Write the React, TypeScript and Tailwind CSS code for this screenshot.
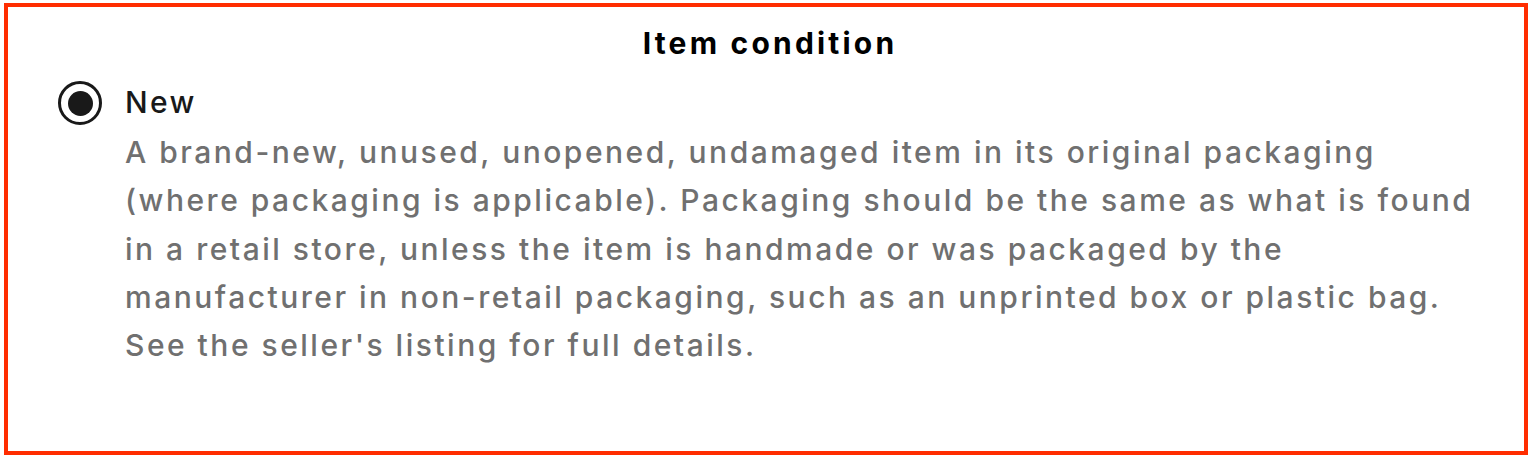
export default function App() {
  return (
    <div className="w-[1532px] h-[458px] bg-white pt-[3px] pl-[4px] font-['Inter',sans-serif]">
      <div className="w-[1524px] h-[452px] border-4 border-[#ff2d00] bg-white">
        {/* Title */}
        <h2 className="text-center text-[30px] font-bold tracking-[3.2px] text-black leading-[36px] pt-[18px] pl-[8px]">
          Item condition
        </h2>

        {/* Radio option */}
        <div className="flex items-start gap-[23px] pl-[50px] pr-[30px] mt-[17px]">
          <div className="pt-[3px] shrink-0">
            <div className="w-[44px] h-[44px] rounded-full border-[3px] border-[#191919] flex items-center justify-center">
              <div className="w-[25px] h-[25px] rounded-full bg-[#191919]" />
            </div>
          </div>
          <div className="flex-1">
            <div className="text-[30px] font-medium tracking-[2.4px] leading-[48px] text-[#191919]">New</div>
            <p className="mt-[2px] text-[30px] font-medium tracking-[2.5px] leading-[48.3px] text-[#707070]">
              A brand-new, unused, unopened, undamaged item in its original packaging
              (where packaging is applicable). Packaging should be the same as what is
              found in a retail store, unless the item is handmade or was packaged by the
              manufacturer in non-retail packaging, such as an unprinted box or plastic
              bag. See the seller's listing for full details.
            </p>
          </div>
        </div>
      </div>
    </div>
  );
}
